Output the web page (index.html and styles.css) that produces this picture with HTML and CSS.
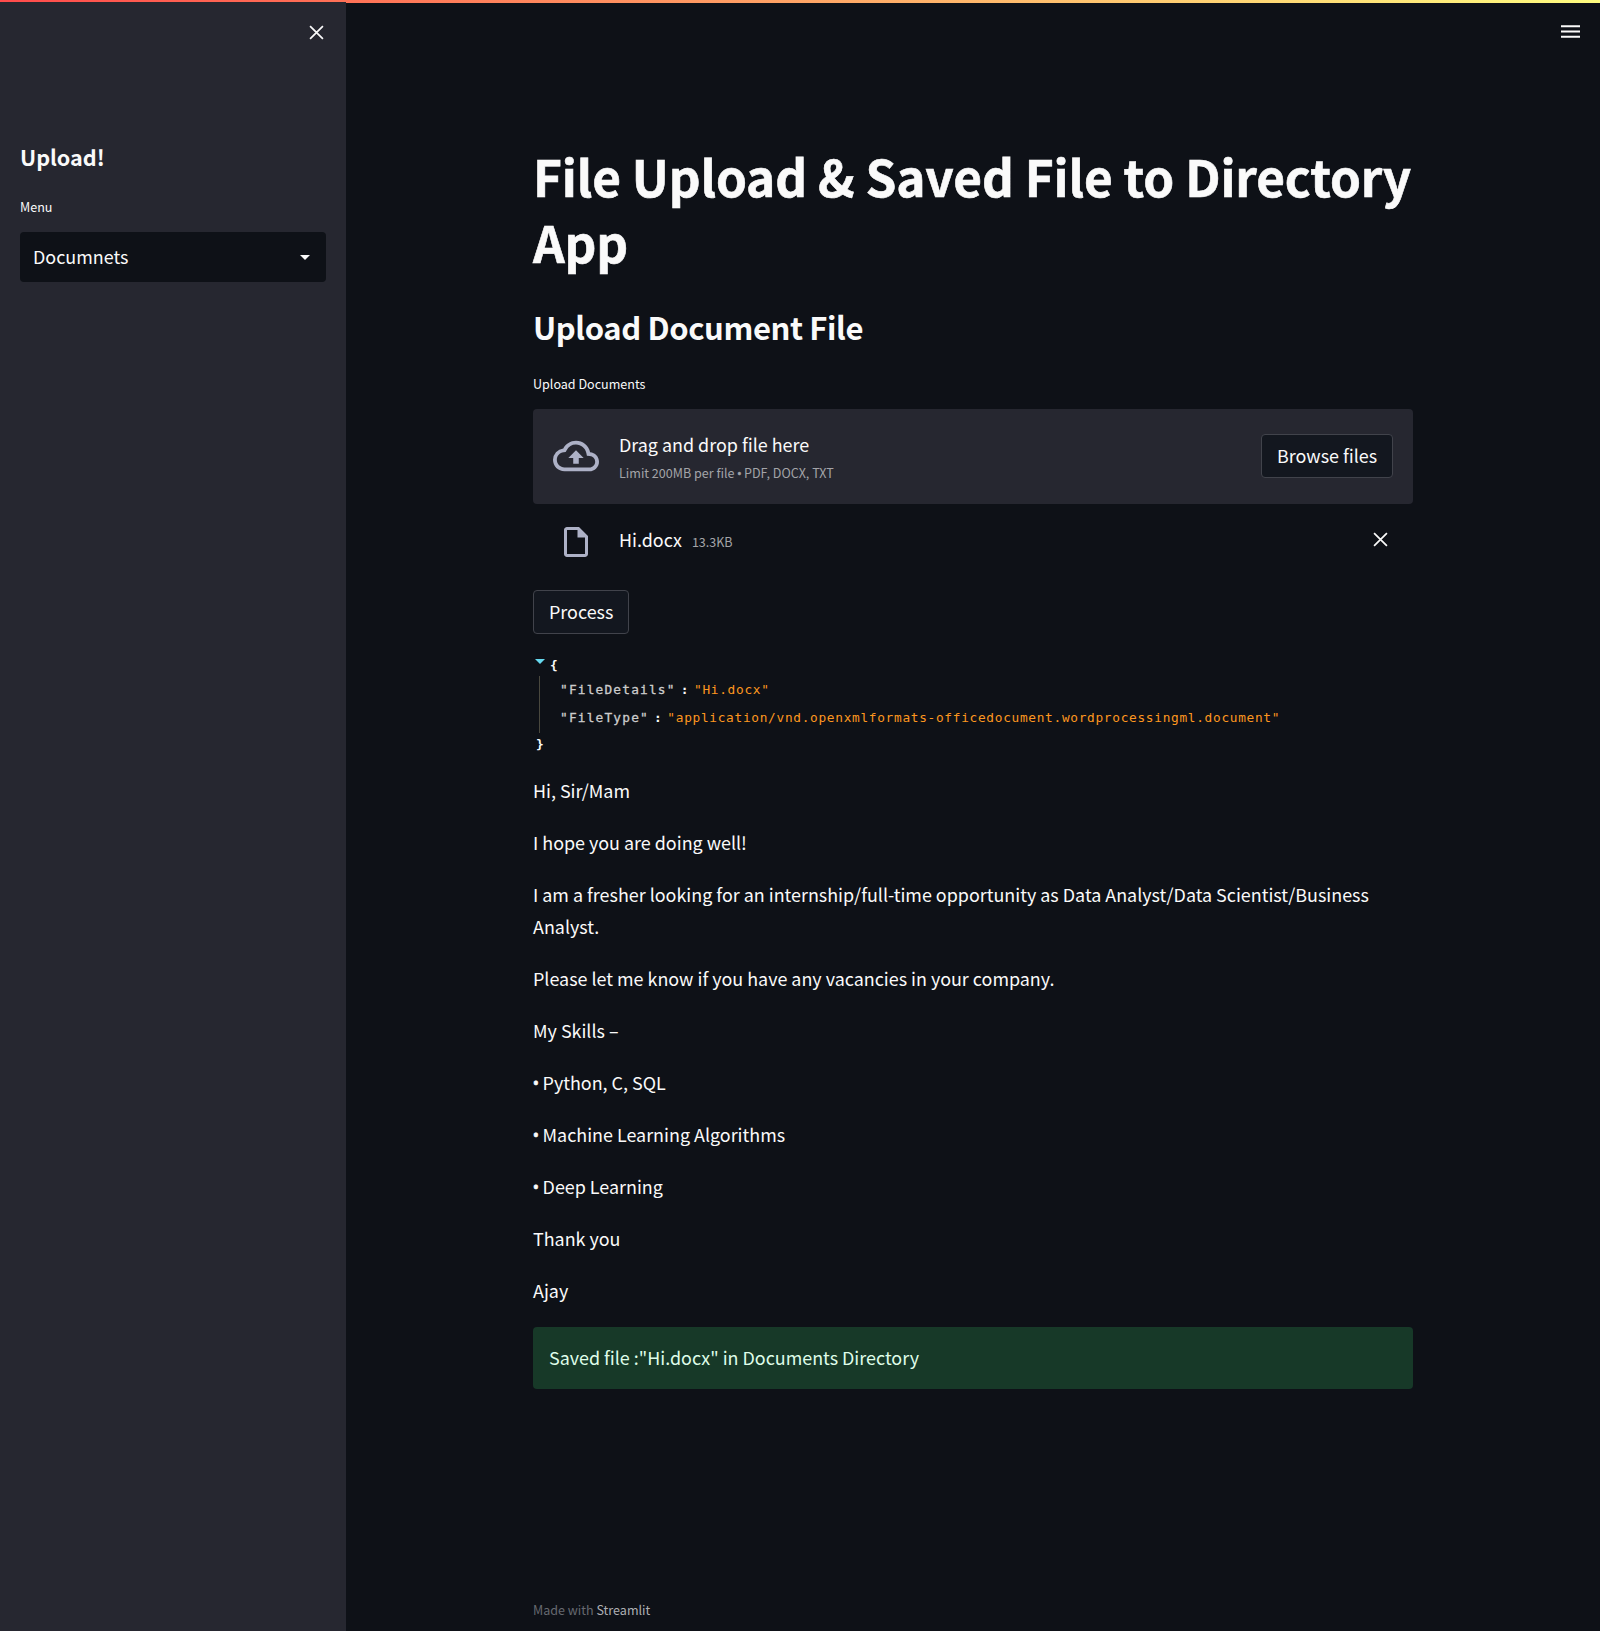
FILE: index.html
```html
<!DOCTYPE html>
<html lang="en">
<head>
<meta charset="utf-8">
<title>File Upload</title>
<link rel="stylesheet" href="styles.css">
</head>
<body>
<div class="decoration"></div>
<aside class="sidebar">
  <div class="sidebar-top">
    <svg class="close" viewBox="0 0 14 14"><path d="M1 1l12 12M13 1L1 13"/></svg>
  </div>
  <h2 class="sidebar-title"><span>Upload!</span></h2>
  <div class="label menu-label"><span>Menu</span></div>
  <div class="select"><span>Documnets</span><svg class="caret" viewBox="0 0 10 5"><path d="M0 0h10L5 5z"/></svg></div>
</aside>
<main class="main">
  <header class="toolbar">
    <svg class="burger" viewBox="0 0 19 13"><path d="M0 1.2h19M0 6.5h19M0 11.8h19"/></svg>
  </header>
  <div class="content">
    <h1 class="title"><span>File Upload &amp; Saved File to Directory</span><br><span>App</span></h1>
    <h2 class="subtitle"><span>Upload Document File</span></h2>
    <div class="label upload-label"><span>Upload Documents</span></div>
    <section class="dropzone">
      <svg class="cloud" viewBox="0 0 24 24"><path d="M19.35 10.04A7.49 7.49 0 0012 4C9.11 4 6.6 5.64 5.35 8.04A5.994 5.994 0 000 14c0 3.31 2.69 6 6 6h13c2.76 0 5-2.24 5-5 0-2.64-2.05-4.78-4.65-4.96zM19 18H6c-2.21 0-4-1.79-4-4 0-2.05 1.53-3.76 3.56-3.97l1.07-.11.5-.95A5.469 5.469 0 0112 6c2.62 0 4.88 1.86 5.39 4.43l.3 1.5 1.53.11A2.98 2.98 0 0122 15c0 1.65-1.35 3-3 3zM8 13h2.55v3h2.9v-3H16l-4-4z"/></svg>
      <div class="drop-text">
        <div class="drop-main"><span>Drag and drop file here</span></div>
        <div class="drop-limit"><span>Limit 200MB per file <span class="bullet">•</span> PDF, DOCX, TXT</span></div>
      </div>
      <button class="button browse"><span>Browse files</span></button>
    </section>
    <div class="file">
      <svg class="doc" viewBox="0 0 24 24"><path d="M14 2H6c-1.100 0-2 .9-2 2v16c0 1.100.89 2 1.990 2H18c1.100 0 2-.9 2-2V8l-6-6zM6 20V4h7v5h5v11H6z"/></svg>
      <span class="file-name">Hi.docx</span>
      <span class="file-size">13.3KB</span>
      <svg class="close" viewBox="0 0 14 14"><path d="M1 1l12 12M13 1L1 13"/></svg>
    </div>
    <button class="button process"><span>Process</span></button>
    <div class="json">
      <div class="brace open"><svg class="toggle" viewBox="0 0 10 5"><path d="M0 0h10L5 5z"/></svg><b>{</b></div>
      <div class="entries">
        <div class="entry"><span class="key">"FileDetails"</span><b class="colon">:</b><span class="value">"Hi.docx"</span></div>
        <div class="entry"><span class="key">"FileType"</span><b class="colon">:</b><span class="value">"application/vnd.openxmlformats-officedocument.wordprocessingml.document"</span></div>
      </div>
      <div class="brace end"><b>}</b></div>
    </div>
    <div class="letter">
      <p>Hi, Sir/Mam</p>
      <p>I hope you are doing well!</p>
      <p>I am a fresher looking for an internship/full-time opportunity as Data Analyst/Data Scientist/Business<br>Analyst.</p>
      <p>Please let me know if you have any vacancies in your company.</p>
      <p>My Skills –</p>
      <p><span class="bullet">•</span> Python, C, SQL</p>
      <p><span class="bullet">•</span> Machine Learning Algorithms</p>
      <p><span class="bullet">•</span> Deep Learning</p>
      <p>Thank you</p>
      <p>Ajay</p>
    </div>
    <div class="alert"><span>Saved file :"Hi.docx" in Documents Directory</span></div>
    <footer class="footer"><span>Made with <a>Streamlit</a></span></footer>
  </div>
</main>
</body>
</html>
```
FILE: styles.css
```css
* { box-sizing: border-box; }
body {
  margin: 0;
  height: 1631px;
  display: grid;
  grid-template-columns: 346px 1fr;
  background: #0e1117;
  color: #fafafa;
  font: 17.92px/32px "Noto Sans CJK SC", sans-serif;
  white-space: nowrap;
  overflow: hidden;
}
h1, h2, p { margin: 0; }
svg { display: block; fill: currentColor; flex: none; }
.decoration {
  position: absolute;
  top: 0; left: 0; right: 0;
  height: 3px;
  background: linear-gradient(90deg, #ff4b4b, #fffd80);
}
.sidebar {
  position: relative;
  margin-top: 2px;
  background: #262730;
  padding: 0 20px;
}
.sidebar-top { height: 139px; padding: 23px 2px 0 0; display: flex; justify-content: flex-end; }
.close { width: 15px; height: 15px; stroke: currentColor; stroke-width: 1.6; fill: none; }
.sidebar-title { font-size: 21.6px; line-height: 32px; font-weight: 600; }
.label { font-size: 12.55px; line-height: 22px; }
.menu-label { margin-top: 23px; }
.select {
  margin-top: 14px;
  height: 50px;
  border-radius: 4px;
  background: #0e1117;
  padding: 0 16px 2px 13px;
  display: flex;
  align-items: center;
  justify-content: space-between;
}
.caret { width: 10px; height: 5px; margin-top: 2px; }
.toolbar { height: 143px; padding: 25px 20px 0; display: flex; justify-content: flex-end; }
.burger { width: 19px; height: 13px; stroke: currentColor; stroke-width: 2; }
.content { width: 880px; margin-left: 187px; }
.title {
  font-size: 49.5px;
  line-height: 66px;
  font-weight: 700;
  letter-spacing: -.15px;
  -webkit-text-stroke: .6px currentColor;
}
.subtitle { margin-top: 30px; font-size: 31px; line-height: 44px; font-weight: 600; letter-spacing: -.4px; }
.upload-label { margin-top: 24px; }
.dropzone {
  margin-top: 14px;
  height: 95px;
  border-radius: 4px;
  background: #262730;
  padding: 0 20px 1px;
  display: flex;
  align-items: center;
}
.cloud { width: 46px; height: 46px; color: #adb1c6; }
.drop-text { margin-left: 20px; padding-top: 3px; }
.drop-main { line-height: 30px; }
.drop-limit { font-size: 12.55px; line-height: 28px; color: #a3a4a8; }
.bullet {
  display: inline-block;
  width: .31em;
  line-height: 1;
  font-family: "Open Sans", sans-serif;
  text-indent: -.03em;
  -webkit-text-stroke: .5px currentColor;
}
.button {
  height: 44px;
  padding: 0 15px 2px;
  border: 1px solid #41434b;
  border-radius: 4px;
  background: #13171f;
  color: inherit;
  font: inherit;
}
.browse { width: 132px; margin-left: auto; }
.process { display: block; width: 96px; margin-top: 30px; }
.file { height: 56px; padding: 15px 25px 0; display: flex; align-items: center; }
.doc { width: 36px; height: 36px; color: #adb1c6; margin-top: 5px; }
.file-name { margin: -2px 0 0 25px; }
.file-size { margin: 4px auto 0 10px; font-size: 12.55px; color: #a3a4a8; }
.json { margin-top: 20px; font: 12.8px/22px "DejaVu Sans Mono", monospace; letter-spacing: .69px; }
.brace { display: flex; height: 22px; }
.open { padding-left: 2px; }
.toggle { width: 10px; height: 5px; margin: 5px 5px 0 0; color: #66d9ef; }
.entries { margin-left: 6px; border-left: 1px solid #49483e; height: 57px; }
.entry { display: flex; height: 28px; line-height: 28px; padding-left: 20px; }
.key { color: #ccc; letter-spacing: 1.19px; -webkit-text-stroke: .3px currentColor; }
.colon { margin: 0 5px; }
.value { color: #fd971f; }
.end { padding-left: 3px; }
.letter { margin-top: 19px; display: flex; flex-direction: column; gap: 20px; }
.alert {
  margin-top: 21px;
  height: 62px;
  padding: 14px 16px;
  border-radius: 4px;
  background: #173928;
  color: #dffde9;
}
.footer { margin-top: 210px; font-size: 12.55px; line-height: 22px; color: #666970; }
.footer a { color: #adafb3; }
```
